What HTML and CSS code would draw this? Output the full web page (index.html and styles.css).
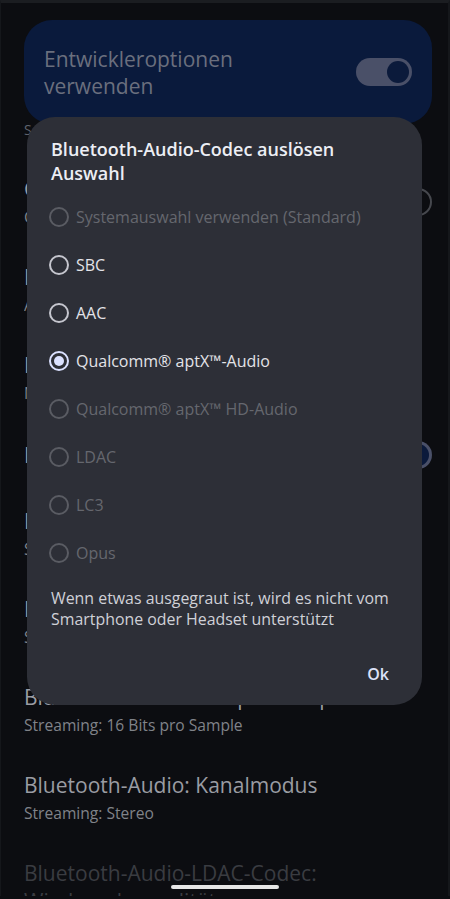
FILE: index.html
```html
<!DOCTYPE html>
<html lang="de">
<head>
<meta charset="utf-8">
<title>Entwickleroptionen</title>
<link rel="stylesheet" href="styles.css">
</head>
<body>
<div class="screen">
  <div class="card">
    <span class="card-title">Entwickleroptionen verwenden</span>
    <span class="switch on"><span class="thumb"></span></span>
  </div>
  <div class="section">Sonstiges</div>
  <div class="item">
    <div class="item-text"><div class="item-title">Geräte ohne Namen anzeigen</div><div class="item-sub">Geräte ohne Namen</div></div>
    <span class="switch off"></span>
  </div>
  <div class="item">
    <div class="item-text"><div class="item-title">Bluetooth-AVRCP-Version</div><div class="item-sub">AVRCP 1.5 (Standard)</div></div>
  </div>
  <div class="item">
    <div class="item-text"><div class="item-title">Bluetooth-MAP-Version</div><div class="item-sub">MAP 1.2 (Standard)</div></div>
  </div>
  <div class="item single">
    <div class="item-text"><div class="item-title">Bluetooth-LE-Audio</div></div>
    <span class="switch on"><span class="thumb"></span></span>
  </div>
  <div class="item">
    <div class="item-text"><div class="item-title">Bluetooth-Audio-Codec</div><div class="item-sub">Streaming: Qualcomm® aptX™-Audio</div></div>
  </div>
  <div class="item">
    <div class="item-text"><div class="item-title">Bluetooth-Audio-Abtastrate</div><div class="item-sub">Streaming: 48,0 kHz</div></div>
  </div>
  <div class="item">
    <div class="item-text"><div class="item-title">Bluetooth-Audio: Bits pro Sample</div><div class="item-sub">Streaming: 16 Bits pro Sample</div></div>
  </div>
  <div class="item">
    <div class="item-text"><div class="item-title">Bluetooth-Audio: Kanalmodus</div><div class="item-sub">Streaming: Stereo</div></div>
  </div>
  <div class="item">
    <div class="item-text"><div class="item-title disabled wrap">Bluetooth-Audio-LDAC-Codec: Wiedergabequalität</div></div>
  </div>
</div>

<div class="dialog" role="dialog">
  <div class="dialog-title">Bluetooth-Audio-Codec auslösen Auswahl</div>
  <div class="options">
    <div class="option disabled"><span class="radio"></span><span>Systemauswahl verwenden (Standard)</span></div>
    <div class="option"><span class="radio"></span><span>SBC</span></div>
    <div class="option"><span class="radio"></span><span>AAC</span></div>
    <div class="option"><span class="radio checked"></span><span>Qualcomm® aptX™-Audio</span></div>
    <div class="option disabled"><span class="radio"></span><span>Qualcomm® aptX™ HD-Audio</span></div>
    <div class="option disabled"><span class="radio"></span><span>LDAC</span></div>
    <div class="option disabled"><span class="radio"></span><span>LC3</span></div>
    <div class="option disabled"><span class="radio"></span><span>Opus</span></div>
  </div>
  <p class="hint">Wenn etwas ausgegraut ist, wird es nicht vom Smartphone oder Headset unterstützt</p>
  <div class="actions"><span class="ok">Ok</span></div>
</div>

<div class="navpill"></div>
</body>
</html>
```

FILE: styles.css
```css
html, body {
  margin: 0;
  padding: 0;
  height: 899px;
  overflow: hidden;
  background: #0c0d11;
  font-family: "Open Sans", "Roboto", "Noto Sans", sans-serif;
}

.screen {
  border-top: 3px solid #1b1d21;
  border-left: 1px solid #15171b;
  border-right: 2px solid #15171b;
  height: 896px;
  box-sizing: border-box;
  overflow: hidden;
}

.card {
  margin: 17px 16px 0 23px;
  height: 104px;
  border-radius: 28px;
  background: #0a1a3c;
  display: flex;
  align-items: center;
  justify-content: space-between;
  padding: 2px 20px 0 20px;
  box-sizing: border-box;
}

.card-title {
  font-size: 21px;
  line-height: 27px;
  color: #6a6f7e;
  width: 250px;
}

.switch {
  flex: none;
  width: 56px;
  height: 28px;
  border-radius: 14px;
  box-sizing: border-box;
  display: flex;
  align-items: center;
}

.card .switch {
  margin-top: -2px;
}

.switch.on {
  background: #4a5068;
  justify-content: flex-end;
  padding-right: 3px;
}

.switch.on .thumb {
  width: 22px;
  height: 22px;
  border-radius: 50%;
  background: #0b1a3b;
}

.switch.off {
  border: 2px solid #46484e;
}

.section {
  margin-top: -4px;
  height: 37px;
  padding-left: 23px;
  font-size: 14px;
  line-height: 20px;
  color: #5f636e;
}

.item {
  display: flex;
  align-items: center;
  justify-content: space-between;
  gap: 16px;
  padding: 18px 16px 16px 23px;
}

.item.single {
  padding: 20px 16px 20px 23px;
}

.item-text {
  min-width: 0;
  flex: 1;
}

.item-title {
  font-size: 21px;
  line-height: 28px;
  color: #9a9ca3;
  white-space: nowrap;
  overflow: hidden;
}

.item-title.wrap {
  white-space: normal;
}

.item-title.disabled {
  color: #3a3c41;
}

.item-sub {
  margin-top: 2px;
  font-size: 15.6px;
  line-height: 24px;
  color: #808389;
  white-space: nowrap;
  overflow: hidden;
}

.dialog {
  position: absolute;
  left: 27px;
  top: 117px;
  width: 395px;
  height: 588px;
  box-sizing: border-box;
  padding: 20px 24px 21px 24px;
  border-radius: 28px;
  background: #2d2f37;
}

.dialog-title {
  font-size: 18px;
  font-weight: 600;
  line-height: 24px;
  color: #eceef4;
}

.options {
  margin-top: 8px;
}

.option {
  height: 48px;
  display: flex;
  align-items: center;
  gap: 7px;
  font-size: 16px;
  color: #e3e3e8;
}

.option.disabled {
  color: #65676e;
}

.radio {
  flex: none;
  margin-left: -2px;
  width: 20px;
  height: 20px;
  border: 2px solid #c5c6ce;
  border-radius: 50%;
  box-sizing: border-box;
  display: flex;
  align-items: center;
  justify-content: center;
}

.option.disabled .radio {
  border-color: #5a5c63;
}

.radio.checked {
  border-color: #dbe1ff;
}

.radio.checked::after {
  content: "";
  width: 10px;
  height: 10px;
  border-radius: 50%;
  background: #dbe1ff;
}

.hint {
  margin: 11px 0 0 0;
  font-size: 15.9px;
  line-height: 21px;
  color: #d0d1d7;
}

.actions {
  margin-top: 34px;
  display: flex;
  justify-content: flex-end;
}

.ok {
  margin-right: 9px;
  font-size: 16px;
  font-weight: 600;
  line-height: 20px;
  color: #dce2f8;
}

.navpill {
  position: absolute;
  left: 171px;
  top: 885px;
  width: 108px;
  height: 4px;
  border-radius: 2px;
  background: #e6e6e6;
}
```
